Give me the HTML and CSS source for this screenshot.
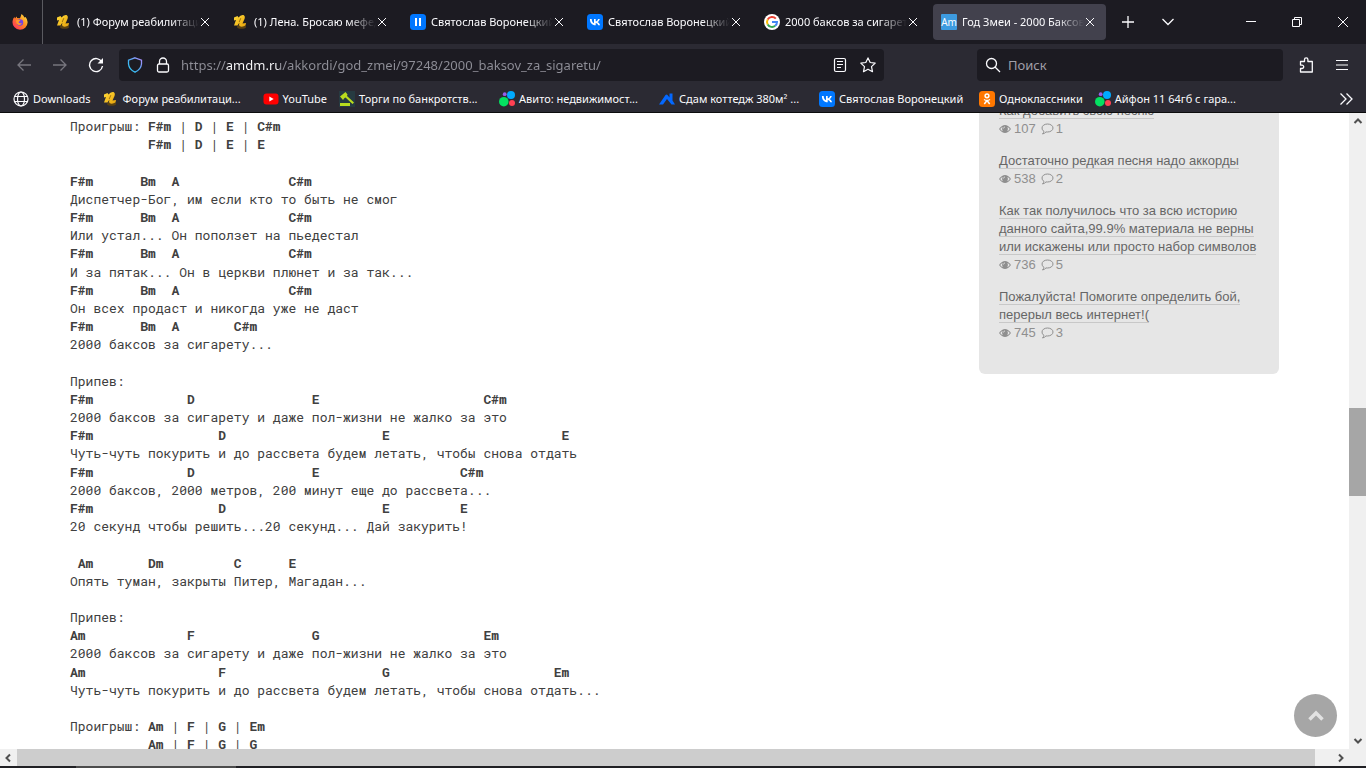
FILE: index.html
```html
<!DOCTYPE html>
<html lang="ru">
<head>
<meta charset="utf-8">
<title>Год Змеи - 2000 Баксов за сигарету</title>
<link rel="stylesheet" href="styles.css">
</head>
<body>
<svg class="defs" aria-hidden="true">
  <defs>
    <linearGradient id="gold" x1="0" y1="0" x2="1" y2="1"><stop offset="0" stop-color="#ffdb3a"/><stop offset="1" stop-color="#e8a30c"/></linearGradient>
    <linearGradient id="fox" x1="1" y1="0" x2="0" y2="1"><stop offset="0" stop-color="#fff44f"/><stop offset=".45" stop-color="#ff8a1e"/><stop offset="1" stop-color="#ff1f6b"/></linearGradient>
    <linearGradient id="shieldline" x1="1" y1="0" x2="0" y2="1"><stop offset="0" stop-color="#b78cff"/><stop offset=".5" stop-color="#4fa8f0"/><stop offset="1" stop-color="#2ad4ff"/></linearGradient>
    <symbol id="i-na" viewBox="0 0 16 16"><ellipse cx="8.500" cy="12.700" rx="4.500" ry="2" fill="#5a4212"/><path d="M1 3.500L4.500 2L5.500 3.500Q7.500 .5 10.500 1Q12.500 2 11.500 5L9.500 9.500L13 9L12.500 11.500Q9 13.500 6.500 12Q5.500 10.500 6.500 8.500L4.500 11.500H1L3 6L1 6.500Z" fill="url(#gold)"/><path d="M7.800 4.200L6.200 8" stroke="#8a5d08" stroke-width=".8"/></symbol>
    <symbol id="i-vk" viewBox="0 0 16 16"><rect width="16" height="16" rx="3.500" fill="#07f"/><path d="M8.500 11.200C5 11.200 3 8.800 2.900 4.900H4.700C4.760 7.700 6 8.900 7 9.150V4.900H8.700V7.350C9.700 7.250 10.800 6.100 11.150 4.900H12.800C12.500 6.500 11.300 7.650 10.500 8.100C11.300 8.500 12.600 9.450 13.100 11.200H11.300C10.900 10 10 9.050 8.700 8.900V11.200Z" fill="#fff"/></symbol>
    <symbol id="i-pause" viewBox="0 0 16 16"><rect width="16" height="16" rx="3.500" fill="#07f"/><path d="M5 4h2v8H5zM9 4h2v8H9z" fill="#fff"/></symbol>
    <symbol id="i-google" viewBox="0 0 16 16"><circle cx="8" cy="8" r="8" fill="#fff"/><g fill="none" stroke-width="2"><path d="M11.800 4.600A5 5 0 0 0 3.700 5.500" stroke="#ea4335"/><path d="M3.700 5.500A5 5 0 0 0 3.700 10.500" stroke="#fbbc05"/><path d="M3.700 10.500A5 5 0 0 0 11.200 11.800" stroke="#34a853"/><path d="M11.200 11.800A5 5 0 0 0 13 8H8" stroke="#4285f4"/></g></symbol>
    <symbol id="i-avito" viewBox="0 0 16 16"><circle cx="4.800" cy="10.700" r="4.800" fill="#04e061"/><circle cx="12" cy="4" r="4" fill="#0af"/><circle cx="13" cy="12" r="3" fill="#ff4053"/><circle cx="5.700" cy="3.200" r="1.900" fill="#965eeb"/></symbol>
    <symbol id="i-close" viewBox="0 0 12 12"><path d="M2 2l8 8M10 2l-8 8" fill="none" stroke="currentColor"/></symbol>
    <symbol id="i-eye" viewBox="0 0 12 10"><path d="M0 5Q6-3 12 5Q6 13 0 5Z" fill="currentColor"/><path d="M1.200 5Q2.200 3.500 3.600 2.900Q2.400 5 3.700 7.200Q2 6.200 1.200 5ZM10.800 5Q9.800 3.500 8.400 2.900Q9.600 5 8.300 7.200Q10 6.200 10.800 5Z" fill="#e6e6e6"/><path d="M4.500 4.500Q4.600 3 6 2.900" stroke="#e6e6e6" stroke-width=".8" fill="none"/></symbol>
    <symbol id="i-talk" viewBox="0 0 13 12"><path d="M6.500 1C9.600 1 12 2.700 12 5S9.600 9 6.500 9L5 8.900Q3.700 10.500 1.500 11Q2.900 9.800 2.800 8.200Q1 7 1 5C1 2.700 3.400 1 6.500 1Z" fill="none" stroke="currentColor"/></symbol>
    <symbol id="i-arrow" viewBox="0 0 16 16"><path d="M15 8H2M7.500 2.500L2 8l5.500 5.500" fill="none" stroke="currentColor" stroke-width="1.300"/></symbol>
    <symbol id="i-caret" viewBox="0 0 10 10"><path d="M1.500 7L5 3.500L8.500 7" fill="none" stroke="#505050" stroke-width="2"/></symbol>
  </defs>
</svg>

<header class="browser">
  <div class="tabs">
    <button class="pinned" aria-label="Firefox"><svg class="ico" viewBox="0 0 16 16"><path d="M8 15.800A7.600 7.600 0 0 1 .6 7Q1 4.200 2.500 3L3 4.500Q4 3 5 2.500L5 4L8 4.300Q9 2 9.500 0Q12 1.500 12.300 3.500L13.500 3Q15.800 5.500 15.600 8.500A7.600 7.600 0 0 1 8 15.800Z" fill="url(#fox)"/><circle cx="8" cy="8.500" r="3.200" fill="#7542e5"/><path d="M4 6.500Q6 5 8.500 6.500L6.500 8Q7 10 10 9Q9 11.500 6.500 11Q4 10 4 6.500Z" fill="#ff9a2a"/></svg></button>
    <div class="tab"><svg class="ico"><use href="#i-na"/></svg><span class="tab-title">(1) Форум реабилитации</span><button class="close" aria-label="Закрыть"><svg class="x"><use href="#i-close"/></svg></button></div>
    <div class="tab"><svg class="ico"><use href="#i-na"/></svg><span class="tab-title">(1) Лена. Бросаю мефедрон</span><button class="close" aria-label="Закрыть"><svg class="x"><use href="#i-close"/></svg></button></div>
    <div class="tab"><svg class="ico"><use href="#i-pause"/></svg><span class="tab-title">Святослав Воронецкий</span><button class="close" aria-label="Закрыть"><svg class="x"><use href="#i-close"/></svg></button></div>
    <div class="tab"><svg class="ico"><use href="#i-vk"/></svg><span class="tab-title">Святослав Воронецкий</span><button class="close" aria-label="Закрыть"><svg class="x"><use href="#i-close"/></svg></button></div>
    <div class="tab"><svg class="ico"><use href="#i-google"/></svg><span class="tab-title">2000 баксов за сигарету</span><button class="close" aria-label="Закрыть"><svg class="x"><use href="#i-close"/></svg></button></div>
    <div class="tab active"><span class="am">Am</span><span class="tab-title">Год Змеи - 2000 Баксов</span><button class="close" aria-label="Закрыть"><svg class="x"><use href="#i-close"/></svg></button></div>
    <button class="tool" aria-label="Новая вкладка"><svg class="ico" viewBox="0 0 16 16"><path d="M8 2v12M2 8h12" stroke="currentColor" stroke-width="1.300"/></svg></button>
    <button class="tool" aria-label="Список вкладок"><svg class="ico" viewBox="0 0 16 16"><path d="M2.500 5L8 10.500L13.500 5" fill="none" stroke="currentColor" stroke-width="1.300"/></svg></button>
    <div class="window">
      <button class="win" aria-label="Свернуть"><svg class="ico" viewBox="0 0 16 16"><path d="M3 7.500h10" stroke="currentColor"/></svg></button>
      <button class="win" aria-label="Восстановить"><svg class="ico" viewBox="0 0 16 16"><path d="M3.500 5.500h7v7h-7zM5.500 5.500v-2h7v7h-2" fill="none" stroke="currentColor"/></svg></button>
      <button class="win" aria-label="Закрыть окно"><svg class="ico" viewBox="0 0 16 16"><path d="M3 3l10 10M13 3L3 13" stroke="currentColor"/></svg></button>
    </div>
  </div>

  <div class="nav">
    <button class="tool dim" aria-label="Назад"><svg class="ico"><use href="#i-arrow"/></svg></button>
    <button class="tool dim" aria-label="Вперёд"><svg class="ico flip"><use href="#i-arrow"/></svg></button>
    <button class="tool" aria-label="Обновить"><svg class="ico" viewBox="0 0 16 16"><path d="M13.800 5A6.500 6.500 0 1 0 14.500 9" fill="none" stroke="currentColor" stroke-width="1.400"/><path d="M15 1v5.500H9.500Z" fill="currentColor"/></svg></button>
    <div class="urlbar">
      <svg class="ico" viewBox="0 0 16 16"><path d="M8 .8L14.500 3.200V7Q14 12.500 8 15.200Q2 12.500 1.500 7V3.200Z" fill="none" stroke="url(#shieldline)" stroke-width="1.300"/></svg>
      <svg class="ico lock" viewBox="0 0 16 16"><rect x="2.500" y="7" width="11" height="8" rx="1.500" fill="none" stroke="currentColor" stroke-width="1.300"/><path d="M4.500 7V4.500a3.500 3.500 0 0 1 7 0V7" fill="none" stroke="currentColor" stroke-width="1.300"/></svg>
      <input class="url" type="text" aria-label="Адрес" value="https://amdm.ru/akkordi/god_zmei/97248/2000_baksov_za_sigaretu/">
      <button class="inbar" aria-label="Режим чтения"><svg class="ico" viewBox="0 0 16 16"><rect x="2.500" y="1.500" width="11" height="13" rx="1.500" fill="none" stroke="currentColor" stroke-width="1.200"/><path d="M5 4.500h6M5 7.500h6M5 10.500h4" stroke="currentColor"/></svg></button>
      <button class="inbar" aria-label="Добавить в закладки"><svg class="ico" viewBox="0 0 16 16"><path d="M8 .9L10.200 5.500L15.200 6.100L11.500 9.600L12.500 14.700L8 12.200L3.500 14.700L4.500 9.600L.8 6.100L5.800 5.500Z" fill="none" stroke="currentColor" stroke-width="1.200" stroke-linejoin="round"/></svg></button>
    </div>
    <div class="search">
      <svg class="ico" viewBox="0 0 16 16"><circle cx="6.500" cy="6.500" r="5" fill="none" stroke="currentColor" stroke-width="1.300"/><path d="M10 10l5 5" stroke="currentColor" stroke-width="1.300"/></svg>
      <input class="query" type="text" aria-label="Поиск" placeholder="Поиск">
    </div>
    <button class="tool push" aria-label="Расширения"><svg class="ico" viewBox="0 0 16 16"><path d="M2.500 4.500H6.500V2.500a1.700 1.700 0 0 1 3.400 0v2H14.300V15H2.500V11.500H4a1.700 1.700 0 0 0 0-3.400H2.500Z" fill="none" stroke="currentColor" stroke-width="1.300" stroke-linejoin="round"/></svg></button>
    <button class="tool" aria-label="Меню"><svg class="ico" viewBox="0 0 16 16"><path d="M2 3.500h12M2 8h12M2 12.500h12" stroke="currentColor" stroke-width="1.200"/></svg></button>
  </div>

  <nav class="bookmarks">
    <a class="mark" href="#"><svg class="ico" viewBox="0 0 16 16"><g fill="none" stroke="currentColor" stroke-width="1.200"><circle cx="8" cy="8" r="7"/><ellipse cx="8" cy="8" rx="3.500" ry="7"/><path d="M1.500 5.500h13M1.500 10.500h13"/></g></svg>Downloads</a>
    <a class="mark wide" href="#"><svg class="ico"><use href="#i-na"/></svg>Форум реабилитаци...</a>
    <a class="mark" href="#"><svg class="ico" viewBox="0 0 16 16"><rect x=".5" y="2.500" width="15" height="11" rx="3" fill="red"/><path d="M6.300 5.500v5L10.700 8Z" fill="#fff"/></svg>YouTube</a>
    <a class="mark wide" href="#"><svg class="ico" viewBox="0 0 16 16"><rect width="16" height="16" fill="#263a41"/><path d="M1 5.500L6.500 1L8.500 3.500L8 5L15 11.500L13.500 13L6.500 6.500L5.500 7L4 9Z" fill="#b9dc1e"/><path d="M1 12h10v3H1z" fill="#b9dc1e"/></svg>Торги по банкротств...</a>
    <a class="mark wide" href="#"><svg class="ico"><use href="#i-avito"/></svg>Авито: недвижимост...</a>
    <a class="mark wide" href="#"><svg class="ico" viewBox="0 0 16 16"><path d="M0 13.500L6.500 4Q7.500 3 8.500 4L10.500 6.500V2.500H13.500V9.500L16 13.500H12.500L8 8L4 13.500Z" fill="#0468ff"/></svg>Сдам коттедж 380м² ...</a>
    <a class="mark wide" href="#"><svg class="ico"><use href="#i-vk"/></svg>Святослав Воронецкий</a>
    <a class="mark" href="#"><svg class="ico" viewBox="0 0 16 16"><rect width="16" height="16" rx="3.500" fill="#ff7700"/><g fill="none" stroke="#fff" stroke-width="1.500"><circle cx="8" cy="4.800" r="1.900"/><path d="M5 8.500Q8 10.500 11 8.500M8 9.500L5.300 13M8 9.500L10.700 13"/></g></svg>Одноклассники</a>
    <a class="mark" href="#"><svg class="ico"><use href="#i-avito"/></svg>Айфон 11 64гб с гара...</a>
    <button class="more" aria-label="Другие закладки"><svg class="ico" viewBox="0 0 16 16"><path d="M2.500 2.500L8 8l-5.500 5.500M8.500 2.500L14 8l-5.500 5.500" fill="none" stroke="currentColor" stroke-width="1.300"/></svg></button>
  </nav>
</header>

<div class="view">
  <main class="page">
<pre class="song">Проигрыш: <b>F#m</b> | <b>D</b> | <b>E</b> | <b>C#m</b>
          <b>F#m</b> | <b>D</b> | <b>E</b> | <b>E</b>

<b>F#m      Bm  A              C#m</b>
Диспетчер-Бог, им если кто то быть не смог
<b>F#m      Bm  A              C#m</b>
Или устал... Он поползет на пьедестал
<b>F#m      Bm  A              C#m</b>
И за пятак... Он в церкви плюнет и за так...
<b>F#m      Bm  A              C#m</b>
Он всех продаст и никогда уже не даст
<b>F#m      Bm  A       C#m</b>
2000 баксов за сигарету...

Припев:
<b>F#m            D               E                     C#m</b>
2000 баксов за сигарету и даже пол-жизни не жалко за это
<b>F#m                D                    E                      E</b>
Чуть-чуть покурить и до рассвета будем летать, чтобы снова отдать
<b>F#m            D               E                  C#m</b>
2000 баксов, 2000 метров, 200 минут еще до рассвета...
<b>F#m                D                    E         E</b>
20 секунд чтобы решить...20 секунд... Дай закурить!

<b> Am       Dm         C      E</b>
Опять туман, закрыты Питер, Магадан...

Припев:
<b>Am             F               G                     Em</b>
2000 баксов за сигарету и даже пол-жизни не жалко за это
<b>Am                 F                    G                     Em</b>
Чуть-чуть покурить и до рассвета будем летать, чтобы снова отдать...

Проигрыш: <b>Am</b> | <b>F</b> | <b>G</b> | <b>Em</b>
          <b>Am</b> | <b>F</b> | <b>G</b> | <b>G</b>
</pre>
    <aside class="topics">
      <article class="topic"><a href="#">Как добавить свою песню</a><p class="meta"><svg class="eye"><use href="#i-eye"/></svg>107<svg class="talk"><use href="#i-talk"/></svg>1</p></article>
      <article class="topic"><a href="#">Достаточно редкая песня надо аккорды</a><p class="meta"><svg class="eye"><use href="#i-eye"/></svg>538<svg class="talk"><use href="#i-talk"/></svg>2</p></article>
      <article class="topic"><a href="#">Как так получилось что за всю историю данного сайта,99.9% материала не верны или искажены или просто набор символов</a><p class="meta"><svg class="eye"><use href="#i-eye"/></svg>736<svg class="talk"><use href="#i-talk"/></svg>5</p></article>
      <article class="topic"><a href="#">Пожалуйста! Помогите определить бой, перерыл весь интернет!(</a><p class="meta"><svg class="eye"><use href="#i-eye"/></svg>745<svg class="talk"><use href="#i-talk"/></svg>3</p></article>
    </aside>
    <button class="totop" aria-label="Наверх"><svg class="up" viewBox="0 0 18 18"><path d="M2.500 12.500L9 6l6.500 6.500" fill="none" stroke="#e2e2e2" stroke-width="3.500"/></svg></button>
  </main>
  <div class="vbar">
    <svg class="caret"><use href="#i-caret"/></svg>
    <div class="vtrack"><div class="vthumb"></div></div>
    <svg class="caret down"><use href="#i-caret"/></svg>
  </div>
</div>
<div class="hbar">
  <svg class="caret left"><use href="#i-caret"/></svg>
  <div class="hthumb"></div>
  <svg class="caret right"><use href="#i-caret"/></svg>
</div>
<footer class="edge"><div class="edge-light"></div></footer>
</body>
</html>
```
FILE: styles.css
```css
* { box-sizing: border-box; }
body {
  margin: 0;
  height: 100vh;
  display: flex;
  flex-direction: column;
  overflow: hidden;
  background: #fff;
  font-family: "Liberation Sans", Arial, sans-serif;
}
button { border: 0; padding: 0; background: none; color: inherit; display: flex; align-items: center; justify-content: center; }
input { border: 0; padding: 0; outline: 0; background: none; }
.defs { position: absolute; width: 0; height: 0; }
.ico { width: 16px; height: 16px; flex: none; display: block; }
.flip { transform: scaleX(-1); }

.browser {
  flex: none;
  background: #2b2a33;
  color: #fbfbfe;
  font: 11px/16px "Noto Sans", "Open Sans", sans-serif;
  border-bottom: 1px solid #0c0c0d;
}
.tabs { display: flex; align-items: center; height: 44px; background: #1c1b22; }
.pinned { width: 43px; height: 44px; padding-right: 2px; margin-right: 3px; border-right: 1px solid #5a5a60; flex: none; }
.tab {
  flex: 0 1 173px;
  min-width: 0;
  height: 36px;
  margin: 0 2px;
  padding: 0 10px 0 8px;
  display: flex;
  align-items: center;
  gap: 5px;
  border-radius: 4px;
}
.active { background: #42414d; }
.tab-title {
  flex: 1;
  min-width: 0;
  overflow: hidden;
  white-space: nowrap;
  -webkit-mask-image: linear-gradient(to left, transparent, #000 28px);
  mask-image: linear-gradient(to left, transparent, #000 28px);
}
.close { margin-left: -5px; }
.x { width: 12px; height: 12px; display: block; }
.am { width: 16px; height: 16px; background: #3d9be0; border-radius: 1px; font-size: 10px; text-align: center; flex: none; }
.tool { width: 36px; height: 32px; flex: none; }
.tabs .tool { width: 40px; }
.nav .dim { color: #77767e; }
.window { display: flex; margin-left: auto; }
.win { width: 46px; height: 44px; }

.nav { display: flex; align-items: center; height: 42px; padding: 0 6px; }
.urlbar, .search { display: flex; align-items: center; height: 32px; background: #1c1b22; border-radius: 4px; }
.urlbar { flex: 1; margin-left: 5px; padding: 0 2px 0 8px; }
.lock { margin: 0 10px 0 12px; }
.url {
  flex: 1;
  min-width: 0;
  height: 24px;
  font: 13px/24px "Noto Sans", "Open Sans", sans-serif;
  color: transparent;
  background: linear-gradient(to right, #8f8f98 45px, #fbfbfe 45px 99px, #8f8f98 99px);
  -webkit-background-clip: text;
  background-clip: text;
}
.inbar { width: 28px; height: 28px; }
.search { width: 306px; margin-left: 93px; padding: 0 8px; gap: 7px; }
.query { flex: 1; min-width: 0; font: 13px/24px "Noto Sans", "Open Sans", sans-serif; color: #fbfbfe; }
.query::placeholder { color: #a09fa8; opacity: 1; }
.push { margin-left: 5px; }

.bookmarks { display: flex; align-items: center; gap: 12px; height: 26px; padding: 0 12px 0 13px; }
.mark { display: flex; align-items: center; gap: 4px; color: inherit; text-decoration: none; white-space: nowrap; }
.wide { width: 148px; }
.more { margin-left: auto; }

.view { flex: 1; min-height: 0; display: flex; }
.page {
  flex: 1;
  min-width: 0;
  position: relative;
  overflow: hidden;
  display: flex;
  justify-content: space-between;
  align-items: flex-start;
  padding: 0 70px;
}
.song {
  margin: 4px 0 0;
  color: #404040;
  font: 13px/1.4 "Roboto Mono", "Liberation Mono", monospace;
}
.topics {
  flex: none;
  width: 300px;
  margin-top: -31px;
  padding: 20px 20px 32px;
  display: flex;
  flex-direction: column;
  gap: 14px;
  background: #e6e6e6;
  border-radius: 6px;
  font-size: 13px;
  line-height: 18px;
}
.topic a { color: #666; text-decoration: none; border-bottom: 1px solid #c8c8c8; }
.meta { margin: 0; display: flex; align-items: center; color: #8f8f8f; }
.eye { width: 12px; height: 10px; margin-right: 3px; }
.talk { width: 13px; height: 12px; margin: 0 2px 0 5px; }
.totop {
  position: absolute;
  right: 12px;
  bottom: 12px;
  width: 43px;
  height: 43px;
  border-radius: 50%;
  background: #a6a6a6;
}
.up { width: 18px; height: 18px; }

.vbar { flex: none; width: 17px; background: #f0f0f0; display: flex; flex-direction: column; align-items: center; padding: 3px 0; }
.caret { width: 10px; height: 10px; flex: none; }
.down { transform: rotate(180deg); }
.left { transform: rotate(-90deg); }
.right { transform: rotate(90deg); }
.vtrack { flex: 1; align-self: stretch; padding-top: 282px; }
.vthumb { height: 88px; background: #a6a6a6; }
.hbar { flex: none; height: 17px; background: #f0f0f0; display: flex; align-items: center; padding: 0 20px 0 3px; }
.hthumb { flex: 1; height: 17px; margin: 0 21px 0 4px; background: #cdcdcd; }
.edge { flex: none; height: 2px; background: #202024; padding-left: 76px; }
.edge-light { width: 160px; height: 2px; background: #4c4c4c; }
```
